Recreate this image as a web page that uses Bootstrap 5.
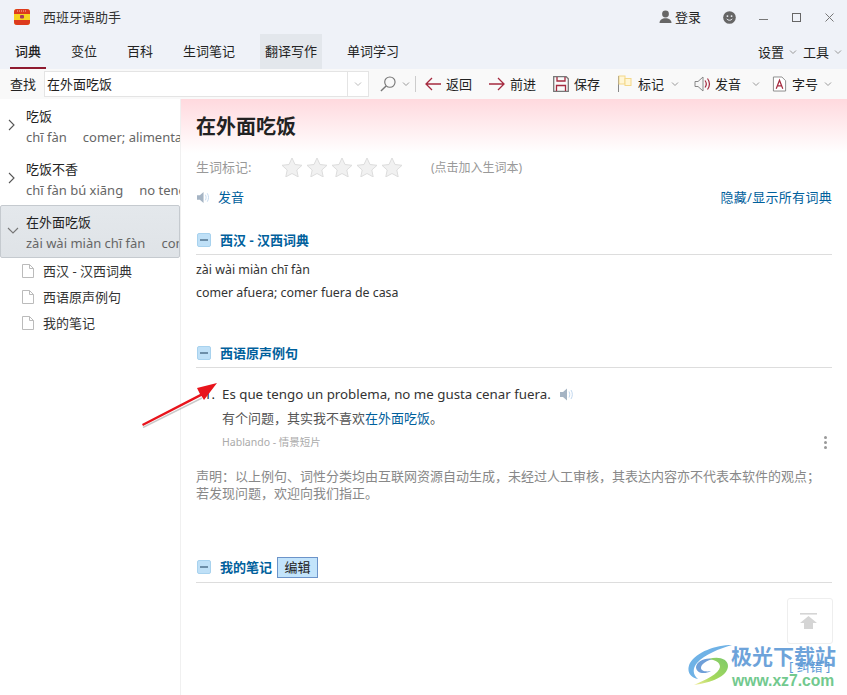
<!DOCTYPE html>
<html lang="zh">

<head>
    <meta charset="UTF-8">
    <meta name="viewport" content="width=device-width, initial-scale=1.0">
    <title>西班牙语助手</title>
    <link href="https://cdn.jsdelivr.net/npm/bootstrap@5.3.3/dist/css/bootstrap.min.css" rel="stylesheet">
    <script src="https://cdn.jsdelivr.net/npm/bootstrap@5.3.3/dist/js/bootstrap.bundle.min.js"></script>
    <style>
        html, body { height: 100%; overflow: hidden; }
        body {
            position: relative;
            font-family: "Noto Sans", "Noto Sans CJK SC", sans-serif;
            font-size: 13px;
            line-height: 18px;
            color: #222;
            background: #fff;
        }
        .app-top { background: #eff2f8; height: 69px; }
        .title-bar { height: 34px; padding-left: 14px; }
        .app-name { margin-left: 13px; color: #333; }
        .login { color: #222; margin: 0 22px 0 3px; }
        .smile-ic { margin-right: 23px; }
        .win-btns { gap: 24px; margin-right: 13px; }
        .tab-bar { height: 35px; padding-left: 10px; gap: 20px; }
        .tab-item {
            height: 35px;
            padding: 0 5px;
            line-height: 34px;
            color: #222;
            text-decoration: none;
            flex: none;
        }
        .tab-item.on { border-bottom: 2px solid #8e1a30; font-weight: 500; }
        .tab-item.hover-tab { background: #e3e7ec; }
        .chev { width: 8px; height: 8px; flex: none; }
        .chev-a { margin: 0 6px 0 5px; }
        .chev-b { margin: 0 5px 0 5px; }
        .tool-bar { background: #f9f9f9; height: 30px; padding-left: 10px; }
        .search-box {
            width: 325px;
            height: 26px;
            margin-left: 8px;
            background: #fff;
            border: 1px solid #e4e4e4;
            padding-left: 2px;
            flex: none;
        }
        .search-drop { width: 21px; border-left: 1px solid #e4e4e4; height: 100%; }
        .search-ic { margin: 0 6px 0 11px; flex: none; }
        .tool-sep { width: 1px; height: 16px; background: #ccc; flex: none; margin: 0 9px 0 5px; }
        .tool-btn { color: #222; flex: none; }
        .tool-btn svg { margin-right: 5px; }
        .tool-btn svg.voice-tool { margin-right: 4px; }
        .gap-17 { margin-left: 17px; }
        .chev-c { margin: 0 15px 0 7px; }
        .chev-d { margin: 0 12px 0 11px; }
        .chev-e { margin-left: 6px; }
        .app-body { height: 596px; }
        .side-panel { width: 181px; flex: none; border-right: 1px solid #f0f0f0; overflow: hidden; }
        .word-row {
            height: 53px;
            white-space: nowrap;
            overflow: hidden;
            padding: 8px 0 0 26px;
            position: relative;
        }
        .word-row .arrow-ic { position: absolute; left: 8px; top: 20px; }
        .word-row .open-ic { left: 6px; top: 21px; }
        .word-row.sel {
            background: linear-gradient(#e4e8ec, #dfe3e7);
            border: 1px solid #c5cacf;
            border-radius: 2px;
            width: 180px;
            padding: 7px 0 0 25px;
        }
        .word-sub { color: #666; margin-top: 3px; }
        .word-sub span { margin-left: 16px; }
        .tree-row { height: 26px; padding-left: 22px; gap: 9px; color: #333; }
        .main-panel { flex: 1; min-width: 0; }
        .head-grad {
            height: 54px;
            padding: 14px 0 0 15px;
            background: linear-gradient(#ffd9de, #fff);
            font-size: 20px;
            line-height: 28px;
            font-weight: 700;
            color: #222;
        }
        .main-pad { padding: 0 15px; }
        .stars-row { height: 28px; color: #999; }
        .stars-row .lab { width: 85px; }
        .stars-box { gap: 3px; width: 122px; flex: none; }
        .hint { margin-left: 28px; font-size: 12px; padding-top: 2px; }
        .voice-row { height: 32px; color: #2a6f9e; }
        .voice-ic { margin: 0 7px 0 1px; }
        .blue-link { color: #00609c; text-decoration: none; }
        .all-dict { letter-spacing: .3px; }
        .sec-head {
            border-bottom: 1px solid #ddd;
            height: 31px;
            padding-top: 2px;
            gap: 9px;
            color: #00609c;
            font-weight: 700;
        }
        .sec-one { margin-top: 11px; }
        .sec-two { margin-top: 33px; }
        .sec-three { margin-top: 50px; padding-top: 0; }
        .sec-toggle {
            width: 14px;
            height: 14px;
            margin-left: 1px;
            background: #bfe0f7;
            border: 1px solid #a8d2ee;
            border-radius: 2px;
            display: flex;
            align-items: center;
            justify-content: center;
            flex: none;
        }
        .sec-toggle i { display: block; width: 8px; height: 2px; background: #6d8ea8; }
        .edit-btn {
            font-weight: 400;
            color: #222;
            background: #c3e4fb;
            border: 1px solid #6c93c9;
            height: 21px;
            line-height: 19px;
            padding: 0 6.500px;
            margin-left: -4px;
        }
        .dict-list { margin-top: 3px; }
        .dict-line { height: 23px; line-height: 23px; color: #333; font-size: 12.400px; }
        .sent-block { padding-left: 26px; position: relative; margin-top: 14px; }
        .sent-num { position: absolute; left: 8px; top: 3px; }
        .sent-src { height: 24px; line-height: 24px; color: #333; font-size: 13.300px; }
        .sent-ic { margin-left: 9px; }
        .sent-cn { height: 24px; line-height: 24px; color: #555; }
        .sent-from { color: #aaa; font-size: 10.500px; height: 24px; line-height: 24px; }
        .dots { gap: 2px; margin-right: 5px; }
        .dots i { width: 3px; height: 3px; background: #999; border-radius: 50%; display: block; }
        .notice { color: #888; line-height: 17px; margin-top: 14px; }
        .to-top {
            position: absolute;
            left: 787px;
            top: 598px;
            width: 46px;
            height: 46px;
            padding-right: 3px;
            border: 1px solid #eee;
            border-radius: 3px;
            background: #fff;
            display: flex;
            align-items: center;
            justify-content: center;
        }
        .red-arrow { position: absolute; left: 138px; top: 380px; }
        .mark-logo { position: absolute; left: 687px; top: 644px; }
        .mark-top {
            position: absolute;
            left: 731px;
            top: 642px;
            color: #5e9ad6;
            font-size: 21px;
            line-height: 28px;
            font-weight: 700;
            opacity: .9;
            white-space: nowrap;
        }
        .mark-url {
            position: absolute;
            left: 732px;
            top: 671px;
            color: #72c98e;
            font-size: 15.700px;
            line-height: 20px;
            font-weight: 600;
            font-family: "Liberation Sans", sans-serif;
            white-space: nowrap;
        }
        .mark-under {
            position: absolute;
            left: 789px;
            top: 658px;
            color: #5e9ad6;
            line-height: 16px;
            white-space: nowrap;
        }
    </style>
</head>

<body>
    <div class="app-top">
        <div class="title-bar d-flex align-items-center">
            <svg width="16" height="16" viewBox="0 0 16 16">
                <rect width="16" height="16" rx="3" fill="#f7d31f" />
                <path d="M0 5V3a3 3 0 0 1 3-3h10a3 3 0 0 1 3 3v2zM0 11h16v2a3 3 0 0 1-3 3H3a3 3 0 0 1-3-3z" fill="#dd3a1e" />
                <path d="M3 2h10" stroke="#f4b9a8" stroke-dasharray="1 1" />
                <rect x="6" y="6" width="4" height="3.500" rx="1" fill="#a83b5c" />
            </svg>
            <span class="app-name">西班牙语助手</span>
            <div class="ms-auto d-flex align-items-center">
                <svg width="13" height="14" viewBox="0 0 13 14">
                    <circle cx="6.500" cy="4" r="3.400" fill="#666" />
                    <path d="M0.500 13c0-3 2.500-4.800 6-4.800s6 1.800 6 4.800z" fill="#666" />
                </svg>
                <span class="login">登录</span>
                <svg width="13" height="13" viewBox="0 0 14 14" class="smile-ic">
                    <circle cx="7" cy="7" r="6.800" fill="#666" />
                    <circle cx="4.800" cy="5.500" r="1" fill="#eff2f8" />
                    <circle cx="9.200" cy="5.500" r="1" fill="#eff2f8" />
                    <path d="M4 8.500c1.500 2 4.500 2 6 0" stroke="#eff2f8" fill="none" />
                </svg>
                <div class="win-btns d-flex align-items-center">
                    <svg width="9" height="9" viewBox="0 0 9 9"><path d="M0 6.500h9" stroke="#777" /></svg>
                    <svg width="9" height="9" viewBox="0 0 9 9"><rect x=".5" y=".5" width="8" height="8" fill="none" stroke="#666" /></svg>
                    <svg width="9" height="9" viewBox="0 0 9 9"><path d="M.5.500l8 8M8.500.500l-8 8" stroke="#777" /></svg>
                </div>
            </div>
        </div>
        <div class="tab-bar d-flex align-items-center">
            <a class="tab-item on" href="#">词典</a>
            <a class="tab-item" href="#">变位</a>
            <a class="tab-item" href="#">百科</a>
            <a class="tab-item" href="#">生词笔记</a>
            <a class="tab-item hover-tab" href="#">翻译写作</a>
            <a class="tab-item" href="#">单词学习</a>
            <div class="ms-auto d-flex align-items-center">
                <span>设置</span>
                <svg class="chev chev-a" viewBox="0 0 8 8"><path d="M1 2.500l3 3 3-3" fill="none" stroke="#999" /></svg>
                <span>工具</span>
                <svg class="chev chev-b" viewBox="0 0 8 8"><path d="M1 2.500l3 3 3-3" fill="none" stroke="#999" /></svg>
            </div>
        </div>
    </div>

    <div class="tool-bar d-flex align-items-center">
        <span>查找</span>
        <div class="search-box d-flex align-items-center justify-content-between">
            <span>在外面吃饭</span>
            <div class="search-drop d-flex align-items-center justify-content-center">
                <svg class="chev" viewBox="0 0 8 8"><path d="M1 2.500l3 3 3-3" fill="none" stroke="#bbb" /></svg>
            </div>
        </div>
        <svg width="16" height="16" viewBox="0 0 17 17" class="search-ic">
            <circle cx="10.500" cy="6.500" r="5.500" fill="none" stroke="#777" stroke-width="1.200" />
            <path d="M6.500 10.500L1 16" stroke="#777" stroke-width="1.500" />
        </svg>
        <svg class="chev" viewBox="0 0 8 8"><path d="M1 2.500l3 3 3-3" fill="none" stroke="#999" /></svg>
        <span class="tool-sep"></span>
        <div class="tool-btn d-flex align-items-center">
            <svg width="16" height="14" viewBox="0 0 16 14"><path d="M16 7H1M7 1L1 7l6 6" fill="none" stroke="#a52a3f" stroke-width="1.300" /></svg>
            <span>返回</span>
        </div>
        <div class="tool-btn d-flex align-items-center gap-17">
            <svg width="16" height="14" viewBox="0 0 16 14"><path d="M0 7h15M9 1l6 6-6 6" fill="none" stroke="#a52a3f" stroke-width="1.300" /></svg>
            <span>前进</span>
        </div>
        <div class="tool-btn d-flex align-items-center gap-17">
            <svg width="16" height="16" viewBox="0 0 16 16">
                <path d="M.7.700h12.500l2.100 2.100v12.500H.7z" fill="none" stroke="#777" stroke-width="1.300" />
                <path d="M4 1v4h8V1" fill="none" stroke="#a52a3f" stroke-width="1.300" />
                <path d="M3.500 15V9.500h9V15" fill="none" stroke="#a52a3f" stroke-width="1.300" />
            </svg>
            <span>保存</span>
        </div>
        <div class="tool-btn d-flex align-items-center gap-17">
            <svg width="16" height="18" viewBox="0 0 16 18">
                <path d="M1.500 1v16" stroke="#888" />
                <rect x="2" y="1" width="6" height="8" fill="#fff6d6" stroke="#f4d88a" />
                <rect x="8" y="3.500" width="6" height="7" fill="#fff6d6" stroke="#f4d88a" />
            </svg>
            <span>标记</span>
        </div>
        <svg class="chev chev-c" viewBox="0 0 8 8"><path d="M1 2.500l3 3 3-3" fill="none" stroke="#999" /></svg>
        <div class="tool-btn d-flex align-items-center">
            <svg width="17" height="16" viewBox="0 0 17 16" class="voice-tool">
                <path d="M1 5.500h3L9 1v14L4 10.500H1z" fill="#f7f7f7" stroke="#888" />
                <path d="M11 4.500c1.500 2 1.500 5 0 7M13.500 2.500c2.500 3.500 2.500 7.500 0 11" fill="none" stroke="#a52a3f" stroke-width="1.200" />
            </svg>
            <span>发音</span>
        </div>
        <svg class="chev chev-d" viewBox="0 0 8 8"><path d="M1 2.500l3 3 3-3" fill="none" stroke="#999" /></svg>
        <div class="tool-btn d-flex align-items-center">
            <svg width="15" height="16" viewBox="0 0 16 16">
                <path d="M1.500.500h9l4 4v11h-13z" fill="#fff" stroke="#888" />
                <path d="M4.500 13L8 4l3.500 9M5.800 10h4.400" fill="none" stroke="#a52a3f" stroke-width="1.300" />
            </svg>
            <span>字号</span>
        </div>
        <svg class="chev chev-e" viewBox="0 0 8 8"><path d="M1 2.500l3 3 3-3" fill="none" stroke="#999" /></svg>
    </div>

    <div class="app-body d-flex">
        <div class="side-panel">
            <div class="word-row">
                <svg class="arrow-ic" width="8" height="12" viewBox="0 0 8 12"><path d="M1 1l5 5-5 5" fill="none" stroke="#555" stroke-width="1.100" /></svg>
                <div>吃饭</div>
                <div class="word-sub">chī fàn<span>comer; alimentarse</span></div>
            </div>
            <div class="word-row">
                <svg class="arrow-ic" width="8" height="12" viewBox="0 0 8 12"><path d="M1 1l5 5-5 5" fill="none" stroke="#555" stroke-width="1.100" /></svg>
                <div>吃饭不香</div>
                <div class="word-sub">chī fàn bú xiāng<span>no tener apetito</span></div>
            </div>
            <div class="word-row sel">
                <svg class="arrow-ic open-ic" width="12" height="8" viewBox="0 0 12 8"><path d="M1 1l5 5 5-5" fill="none" stroke="#777" stroke-width="1.100" /></svg>
                <div>在外面吃饭</div>
                <div class="word-sub">zài wài miàn chī fàn<span>comer afuera</span></div>
            </div>
            <div class="tree-row d-flex align-items-center">
                <svg width="12" height="14" viewBox="0 0 12 14"><path d="M.5.500h7l4 4v9H.5z" fill="#fff" stroke="#bbb" /><path d="M7.500.500v4h4" fill="none" stroke="#bbb" /></svg>
                <span>西汉 - 汉西词典</span>
            </div>
            <div class="tree-row d-flex align-items-center">
                <svg width="12" height="14" viewBox="0 0 12 14"><path d="M.5.500h7l4 4v9H.5z" fill="#fff" stroke="#bbb" /><path d="M7.500.500v4h4" fill="none" stroke="#bbb" /></svg>
                <span>西语原声例句</span>
            </div>
            <div class="tree-row d-flex align-items-center">
                <svg width="12" height="14" viewBox="0 0 12 14"><path d="M.5.500h7l4 4v9H.5z" fill="#fff" stroke="#bbb" /><path d="M7.500.500v4h4" fill="none" stroke="#bbb" /></svg>
                <span>我的笔记</span>
            </div>
        </div>

        <div class="main-panel">
            <div class="head-grad">在外面吃饭</div>
            <div class="main-pad">
                <div class="stars-row d-flex align-items-center">
                    <span class="lab">生词标记:</span>
                    <div class="stars-box d-flex">
                        <svg width="22" height="20" viewBox="0 0 22 20"><path d="M11 1l3 6.500 7 .8-5.200 4.700 1.400 6.900L11 16.500l-6.200 3.400 1.400-6.900L1 8.300l7-.8z" fill="#f1f1f1" stroke="#ddd" /></svg>
                        <svg width="22" height="20" viewBox="0 0 22 20"><path d="M11 1l3 6.500 7 .8-5.200 4.700 1.400 6.900L11 16.500l-6.200 3.400 1.400-6.900L1 8.300l7-.8z" fill="#f1f1f1" stroke="#ddd" /></svg>
                        <svg width="22" height="20" viewBox="0 0 22 20"><path d="M11 1l3 6.500 7 .8-5.200 4.700 1.400 6.900L11 16.500l-6.200 3.400 1.400-6.900L1 8.300l7-.8z" fill="#f1f1f1" stroke="#ddd" /></svg>
                        <svg width="22" height="20" viewBox="0 0 22 20"><path d="M11 1l3 6.500 7 .8-5.200 4.700 1.400 6.900L11 16.500l-6.200 3.400 1.400-6.900L1 8.300l7-.8z" fill="#f1f1f1" stroke="#ddd" /></svg>
                        <svg width="22" height="20" viewBox="0 0 22 20"><path d="M11 1l3 6.500 7 .8-5.200 4.700 1.400 6.900L11 16.500l-6.200 3.400 1.400-6.900L1 8.300l7-.8z" fill="#f1f1f1" stroke="#ddd" /></svg>
                    </div>
                    <span class="hint">(点击加入生词本)</span>
                </div>
                <div class="voice-row d-flex align-items-center justify-content-between">
                    <div class="d-flex align-items-center">
                        <svg width="14" height="13" viewBox="0 0 15 13" class="voice-ic">
                            <path d="M0 4h3l4-3.500v12L3 9H0z" fill="#a5b4c4" />
                            <path d="M9 3.500c1 2 1 4 0 6M11 2c1.800 3 1.800 6 0 9" fill="none" stroke="#c2d8ef" />
                        </svg>
                        <a class="blue-link" href="#">发音</a>
                    </div>
                    <a class="blue-link all-dict" href="#">隐藏/显示所有词典</a>
                </div>

                <div class="sec-head sec-one d-flex align-items-center">
                    <span class="sec-toggle"><i></i></span><span>西汉 - 汉西词典</span>
                </div>
                <div class="dict-list">
                    <div class="dict-line">zài wài miàn chī fàn</div>
                    <div class="dict-line">comer afuera; comer fuera de casa</div>
                </div>

                <div class="sec-head sec-two d-flex align-items-center">
                    <span class="sec-toggle"><i></i></span><span>西语原声例句</span>
                </div>
                <div class="sent-block">
                    <span class="sent-num">1.</span>
                    <div class="sent-src d-flex align-items-center">
                        <span>Es que tengo un problema, no me gusta cenar fuera.</span>
                        <svg width="15" height="13" viewBox="0 0 15 13" class="sent-ic">
                            <path d="M0 4h3l4-3.500v12L3 9H0z" fill="#a5b4c4" />
                            <path d="M9 3.500c1 2 1 4 0 6M11 2c1.800 3 1.800 6 0 9" fill="none" stroke="#c2d8ef" />
                        </svg>
                    </div>
                    <div class="sent-cn">有个问题，其实我不喜欢<span class="blue-link">在外面吃饭</span>。</div>
                    <div class="sent-from d-flex justify-content-between align-items-center">
                        <span>Hablando - 情景短片</span>
                        <div class="dots d-flex flex-column"><i></i><i></i><i></i></div>
                    </div>
                </div>
                <div class="notice">声明：以上例句、词性分类均由互联网资源自动生成，未经过人工审核，其表达内容亦不代表本软件的观点；若发现问题，欢迎向我们指正。</div>

                <div class="sec-head sec-three d-flex align-items-center">
                    <span class="sec-toggle"><i></i></span><span>我的笔记</span><span class="edit-btn">编辑</span>
                </div>
            </div>
        </div>
    </div>

    <div class="to-top">
        <svg width="17" height="16" viewBox="0 0 17 16">
            <path d="M0 .800h17" stroke="#d5d5d5" stroke-width="1.600" />
            <path d="M8.500 3L17 10h-4v6H4v-6H0z" fill="#d5d5d5" />
        </svg>
    </div>

    <svg class="red-arrow" width="82" height="48" viewBox="0 0 82 48">
        <path d="M5 47.500L64 18" stroke="#888" stroke-opacity=".45" stroke-width="1.500" fill="none" />
        <path d="M4 44L62 14l-3-6 20-5-13 17-2.500-4L5 46z" fill="#e8141c" />
    </svg>

    <svg class="mark-logo" width="46" height="42" viewBox="0 0 46 42">
        <defs>
            <linearGradient id="swooshGreen" x1="1" y1="0" x2="0" y2="1">
                <stop offset="0" stop-color="#7cc96a" />
                <stop offset=".6" stop-color="#a6d95c" />
                <stop offset="1" stop-color="#f3ec9a" />
            </linearGradient>
        </defs>
        <path d="M45 1C28 1 10 8 3 19c-4 8 0 15 8 16-5-4-6-10-1-16C18 10 32 5 45 1z" fill="#6fb2e6" />
        <path d="M27 15c-9-2-17 2-18 8 0 6 8 8 15 4-5 1-10 0-10-3 0-4 6-8 13-9z" fill="#6f9fd8" />
        <path d="M22 15c8-3 19-1 19 7 0 10-17 17-34 19 11-5 25-11 26-18 0-5-5-7-11-8z" fill="url(#swooshGreen)" />
    </svg>
    <div class="mark-top">极光下载站</div>
    <div class="mark-under">[ 纠错 ]</div>
    <div class="mark-url">www.xz7.com</div>
</body>

</html>
